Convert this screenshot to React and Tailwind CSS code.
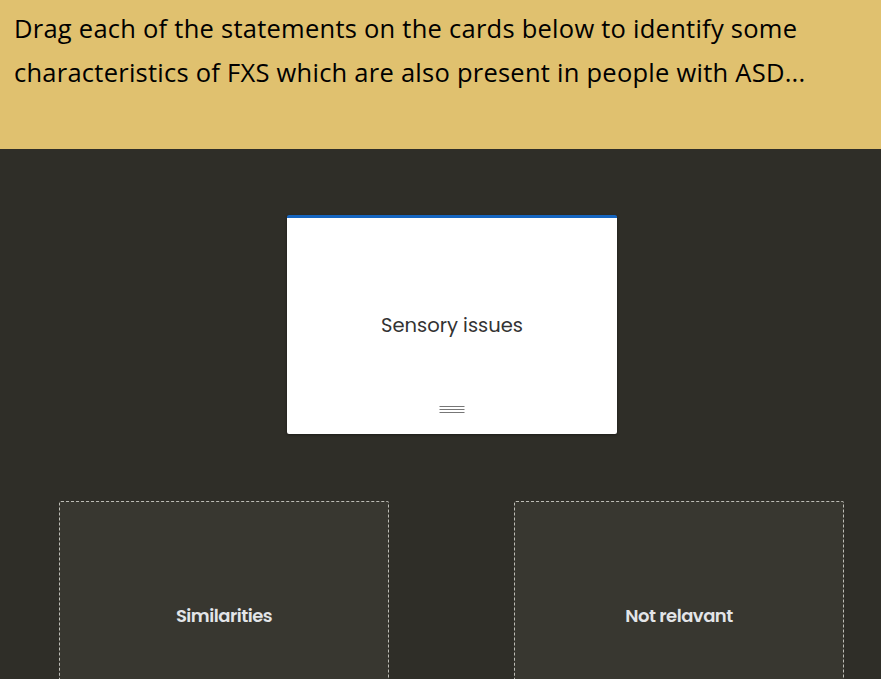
import React from 'react';

const DropZone = ({ label }) => (
  <div className="w-[330px] h-[228px] shrink-0 border border-dashed border-[#bdbdb6] rounded-[2px] bg-[#383730] flex items-center justify-center">
    <span className="text-[18px] font-semibold tracking-[-0.5px] text-[#e3e5e8] font-['Poppins','Inter','Noto_Sans',sans-serif]">
      {label}
    </span>
  </div>
);

export default function App() {
  return (
    <div className="w-[881px] h-[679px] overflow-hidden bg-[#2f2e28]">
      <div className="h-[149px] bg-[#e0c16f] px-[14px] pt-[6px]">
        <p className="max-w-[820px] text-[25.5px] leading-[44px] tracking-[0.25px] text-black font-['Open_Sans','Noto_Sans',sans-serif]">
          Drag each of the statements on the cards below to identify some characteristics of FXS which are also present in people with ASD...
        </p>
      </div>

      <div className="pt-[66px] pl-[287px]">
        <div className="relative w-[330px] h-[219px] bg-white border-t-[3px] border-[#1565c0] rounded-[2px] shadow-[0_1px_3px_rgba(0,0,0,0.4)] flex items-center justify-center">
          <span className="text-[19.5px] text-[#333] font-['Poppins','Inter','Noto_Sans',sans-serif]">
            Sensory issues
          </span>
          <div className="absolute bottom-[21px] left-1/2 -translate-x-1/2 flex flex-col gap-[2px]">
            <div className="w-[25px] h-px bg-[#777]" />
            <div className="w-[25px] h-px bg-[#777]" />
            <div className="w-[25px] h-px bg-[#777]" />
          </div>
        </div>
      </div>

      <div className="flex pl-[59px] gap-[125px] pt-[67px]">
        <DropZone label="Similarities" />
        <DropZone label="Not relavant" />
      </div>
    </div>
  );
}
